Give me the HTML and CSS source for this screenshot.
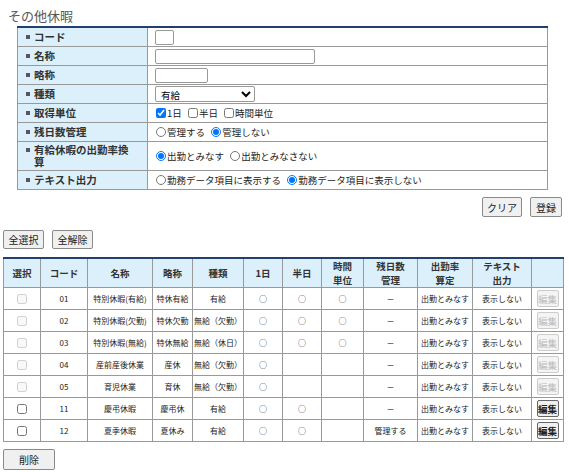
FILE: index.html
```html
<!DOCTYPE html>
<html lang="ja">

<head>
  <meta charset="UTF-8">
  <meta name="viewport" content="width=device-width, initial-scale=1.0">
  <title>その他休暇</title>
  <link rel="stylesheet" href="styles.css">
</head>

<body>
  <div class="page">
    <h2 class="pageTitle">その他休暇</h2>

    <table class="editForm">
      <tr>
        <th><span class="mark"></span><span>コード</span></th>
        <td><input type="text" class="txt txtCode"></td>
      </tr>
      <tr>
        <th><span class="mark"></span><span>名称</span></th>
        <td><input type="text" class="txt txtName"></td>
      </tr>
      <tr>
        <th><span class="mark"></span><span>略称</span></th>
        <td><input type="text" class="txt txtShort"></td>
      </tr>
      <tr>
        <th><span class="mark"></span><span>種類</span></th>
        <td>
          <select class="sel">
            <option>有給</option>
            <option>無給（欠勤）</option>
            <option>無給（休日）</option>
          </select>
        </td>
      </tr>
      <tr>
        <th><span class="mark"></span><span>取得単位</span></th>
        <td>
          <label class="opt"><input type="checkbox" checked>1日</label>
          <label class="opt"><input type="checkbox">半日</label>
          <label class="opt"><input type="checkbox">時間単位</label>
        </td>
      </tr>
      <tr>
        <th><span class="mark"></span><span>残日数管理</span></th>
        <td>
          <label class="opt"><input type="radio" name="zan">管理する</label>
          <label class="opt"><input type="radio" name="zan" checked>管理しない</label>
        </td>
      </tr>
      <tr class="tall">
        <th><span class="mark"></span><span>有給休暇の出勤率換算</span></th>
        <td>
          <label class="opt"><input type="radio" name="rate" checked>出勤とみなす</label>
          <label class="opt"><input type="radio" name="rate">出勤とみなさない</label>
        </td>
      </tr>
      <tr>
        <th><span class="mark"></span><span>テキスト出力</span></th>
        <td>
          <label class="opt"><input type="radio" name="out">勤務データ項目に表示する</label>
          <label class="opt"><input type="radio" name="out" checked>勤務データ項目に表示しない</label>
        </td>
      </tr>
    </table>

    <div class="formButtons">
      <button class="btn btnClear">クリア</button>
      <button class="btn btnSave">登録</button>
    </div>

    <div class="listButtons">
      <button class="btn">全選択</button>
      <button class="btn">全解除</button>
    </div>

    <table class="list">
      <colgroup>
        <col style="width:37px">
        <col style="width:47px">
        <col style="width:65px">
        <col style="width:40px">
        <col style="width:51px">
        <col style="width:39px">
        <col style="width:39px">
        <col style="width:42px">
        <col style="width:54px">
        <col style="width:55px">
        <col style="width:59px">
        <col style="width:32px">
      </colgroup>
      <tr>
        <th>選択</th>
        <th>コード</th>
        <th>名称</th>
        <th>略称</th>
        <th>種類</th>
        <th>1日</th>
        <th>半日</th>
        <th><span class="ln">時間</span><span class="ln">単位</span></th>
        <th><span class="ln">残日数</span><span class="ln">管理</span></th>
        <th><span class="ln">出勤率</span><span class="ln">算定</span></th>
        <th><span class="ln">テキスト</span><span class="ln">出力</span></th>
        <th></th>
      </tr>
      <tr>
        <td><input type="checkbox" disabled></td>
        <td>01</td>
        <td>特別休暇(有給)</td>
        <td>特休有給</td>
        <td>有給</td>
        <td>○</td>
        <td>○</td>
        <td>○</td>
        <td>－</td>
        <td>出勤とみなす</td>
        <td>表示しない</td>
        <td><button class="btnEdit" disabled>編集</button></td>
      </tr>
      <tr>
        <td><input type="checkbox" disabled></td>
        <td>02</td>
        <td>特別休暇(欠勤)</td>
        <td>特休欠勤</td>
        <td>無給（欠勤）</td>
        <td>○</td>
        <td>○</td>
        <td>○</td>
        <td>－</td>
        <td>出勤とみなす</td>
        <td>表示しない</td>
        <td><button class="btnEdit" disabled>編集</button></td>
      </tr>
      <tr>
        <td><input type="checkbox" disabled></td>
        <td>03</td>
        <td>特別休暇(無給)</td>
        <td>特休無給</td>
        <td>無給（休日）</td>
        <td>○</td>
        <td>○</td>
        <td>○</td>
        <td>－</td>
        <td>出勤とみなす</td>
        <td>表示しない</td>
        <td><button class="btnEdit" disabled>編集</button></td>
      </tr>
      <tr>
        <td><input type="checkbox" disabled></td>
        <td>04</td>
        <td>産前産後休業</td>
        <td>産休</td>
        <td>無給（欠勤）</td>
        <td>○</td>
        <td></td>
        <td></td>
        <td>－</td>
        <td>出勤とみなす</td>
        <td>表示しない</td>
        <td><button class="btnEdit" disabled>編集</button></td>
      </tr>
      <tr>
        <td><input type="checkbox" disabled></td>
        <td>05</td>
        <td>育児休業</td>
        <td>育休</td>
        <td>無給（欠勤）</td>
        <td>○</td>
        <td></td>
        <td></td>
        <td>－</td>
        <td>出勤とみなす</td>
        <td>表示しない</td>
        <td><button class="btnEdit" disabled>編集</button></td>
      </tr>
      <tr>
        <td><input type="checkbox"></td>
        <td>11</td>
        <td>慶弔休暇</td>
        <td>慶弔休</td>
        <td>有給</td>
        <td>○</td>
        <td>○</td>
        <td></td>
        <td>－</td>
        <td>出勤とみなす</td>
        <td>表示しない</td>
        <td><button class="btnEdit">編集</button></td>
      </tr>
      <tr>
        <td><input type="checkbox"></td>
        <td>12</td>
        <td>夏季休暇</td>
        <td>夏休み</td>
        <td>有給</td>
        <td>○</td>
        <td>○</td>
        <td></td>
        <td>管理する</td>
        <td>出勤とみなす</td>
        <td>表示しない</td>
        <td><button class="btnEdit">編集</button></td>
      </tr>
    </table>

    <div class="deleteRow">
      <button class="btn btnDelete">削除</button>
    </div>
  </div>
</body>

</html>
```

FILE: styles.css
```css
body {
  margin: 0;
  background-color: white;
  color: #222;
  font-family: "Noto Sans CJK JP", "Noto Sans", sans-serif;
  font-size: 10px;
}

.page {
  padding: 0 6px 0 3px;
}

.pageTitle {
  margin: 0 0 0 5px;
  padding-top: 7px;
  height: 19px;
  font-size: 13px;
  font-weight: normal;
  line-height: 17px;
  color: #555;
}

/* input form */
.editForm {
  margin-left: 14px;
  width: 531px;
  border-collapse: collapse;
  border-top: 2px solid #22406e;
}

.editForm th,
.editForm td {
  height: 18px;
  padding: 0;
  border: 1px solid #999;
  vertical-align: middle;
}

.editForm tr.tall th,
.editForm tr.tall td {
  height: 28px;
}

.editForm th {
  width: 111px;
  padding: 0 10px 0 8px;
  background-color: #dcf0fb;
  color: #333;
  font-size: 10.5px;
  font-weight: bold;
  text-align: left;
  line-height: 12px;
}

.editForm th span {
  display: inline-block;
  vertical-align: top;
}

.editForm th span:last-child {
  width: 100px;
}

.mark {
  width: 4px;
  height: 4px;
  margin: 4px 4px 0 0;
  background-color: #556;
}

.editForm td {
  padding-left: 7px;
  font-size: 9.5px;
}

.txt {
  box-sizing: border-box;
  height: 15px;
  margin: 0;
  padding: 0 2px;
  border: 1px solid #999;
  border-radius: 2px;
  vertical-align: middle;
}

.txtCode {
  width: 19px;
}

.txtName {
  width: 160px;
}

.txtShort {
  width: 53px;
}

.sel {
  box-sizing: border-box;
  width: 100px;
  height: 16px;
  margin: 0;
  padding: 0 1px;
  border: 1px solid #999;
  border-radius: 2px;
  background-color: white;
  font-family: "Noto Sans CJK JP", sans-serif;
  font-size: 9.5px;
  vertical-align: middle;
}

.opt {
  margin-right: 3px;
  white-space: nowrap;
}

.opt input {
  width: 10px;
  height: 10px;
  margin: 0 1px 0 1px;
  vertical-align: -1px;
}

/* buttons */
.btn {
  height: 20px;
  padding: 0;
  border: 1px solid #8a8a8a;
  border-radius: 2px;
  background-color: #f0f0f0;
  color: #222;
  font-family: "Noto Sans CJK JP", sans-serif;
  font-size: 10px;
  white-space: nowrap;
  cursor: pointer;
}

.formButtons {
  display: flex;
  justify-content: flex-end;
  gap: 8px;
  margin-top: 7px;
  padding-right: 1px;
}

.btnClear {
  width: 40px;
}

.btnSave {
  width: 32px;
}

.listButtons {
  display: flex;
  gap: 8px;
  margin-top: 13px;
}

.listButtons .btn {
  width: 41px;
  height: 19px;
}

/* list table */
.list {
  width: 560px;
  margin-top: 8px;
  border-collapse: collapse;
  table-layout: fixed;
  border-top: 2px solid #22406e;
}

.list th,
.list td {
  padding: 0;
  border: 1px solid #999;
  text-align: center;
  vertical-align: middle;
}

.list th {
  height: 28px;
  background-color: #dcf0fb;
  color: #333;
  font-size: 9.5px;
  font-weight: bold;
  line-height: 14px;
}

.list th .ln {
  display: block;
  height: 14px;
}

.list td {
  height: 21px;
  font-size: 8px;
  white-space: nowrap;
}

.list td input {
  width: 10px;
  height: 10px;
  margin: 0;
  vertical-align: middle;
}

.btnEdit {
  width: 22px;
  height: 17px;
  padding: 0;
  border: 1px solid #666;
  border-radius: 2px;
  background-color: #f0f0f0;
  color: #222;
  font-family: "Noto Sans CJK JP", sans-serif;
  font-size: 9.5px;
  font-weight: bold;
  white-space: nowrap;
  vertical-align: middle;
}

.btnEdit:disabled {
  border-color: #ccc;
  background-color: #f4f4f4;
  color: #bbb;
  font-weight: normal;
}

.deleteRow {
  margin-top: 7px;
}

.btnDelete {
  width: 52px;
  height: 21px;
}
```
